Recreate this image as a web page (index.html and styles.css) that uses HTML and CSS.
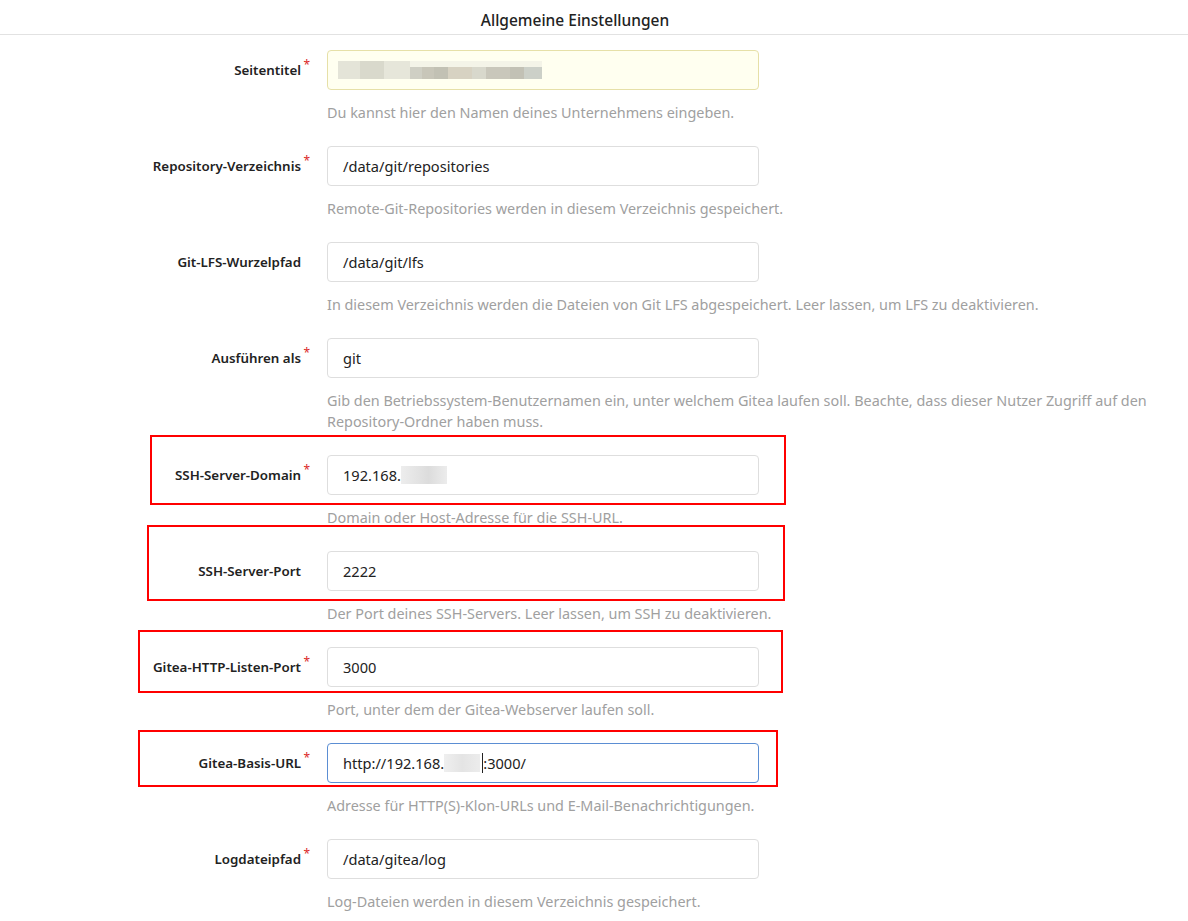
FILE: index.html
```html
<!DOCTYPE html>
<html lang="de">
<head>
<meta charset="utf-8">
<title>Allgemeine Einstellungen</title>
<link rel="stylesheet" href="styles.css">
</head>
<body>
<div class="page">
  <h4 class="header">Allgemeine Einstellungen</h4>
  <div class="form">
    <div class="field required">
      <label class="label">Seitentitel</label>
      <div class="input warn"><span class="blur b1"><i class="s1"></i><i class="s2"></i><i class="s3"></i><i class="s4"></i><i class="s5"></i><i class="s6"></i><i class="s7"></i><i class="s8"></i><i class="s9"></i><i class="s10"></i><i class="s11"></i></span></div>
      <div class="help">Du kannst hier den Namen deines Unternehmens eingeben.</div>
    </div>
    <div class="field required">
      <label class="label">Repository-Verzeichnis</label>
      <div class="input">/data/git/repositories</div>
      <div class="help">Remote-Git-Repositories werden in diesem Verzeichnis gespeichert.</div>
    </div>
    <div class="field">
      <label class="label">Git-LFS-Wurzelpfad</label>
      <div class="input">/data/git/lfs</div>
      <div class="help">In diesem Verzeichnis werden die Dateien von Git LFS abgespeichert. Leer lassen, um LFS zu deaktivieren.</div>
    </div>
    <div class="field required">
      <label class="label">Ausführen als</label>
      <div class="input">git</div>
      <div class="help">Gib den Betriebssystem-Benutzernamen ein, unter welchem Gitea laufen soll. Beachte, dass dieser Nutzer Zugriff auf den Repository-Ordner haben muss.</div>
    </div>
    <div class="field required">
      <label class="label">SSH-Server-Domain</label>
      <div class="input">192.168.<span class="blur b2"></span></div>
      <div class="help">Domain oder Host-Adresse für die SSH-URL.</div>
    </div>
    <div class="field">
      <label class="label">SSH-Server-Port</label>
      <div class="input">2222</div>
      <div class="help">Der Port deines SSH-Servers. Leer lassen, um SSH zu deaktivieren.</div>
    </div>
    <div class="field required">
      <label class="label">Gitea-HTTP-Listen-Port</label>
      <div class="input">3000</div>
      <div class="help">Port, unter dem der Gitea-Webserver laufen soll.</div>
    </div>
    <div class="field required">
      <label class="label">Gitea-Basis-URL</label>
      <div class="input focus">http://192.168.<span class="blur b3"></span><span class="caret"></span>:3000/</div>
      <div class="help">Adresse für HTTP(S)-Klon-URLs und E-Mail-Benachrichtigungen.</div>
    </div>
    <div class="field required">
      <label class="label">Logdateipfad</label>
      <div class="input">/data/gitea/log</div>
      <div class="help">Log-Dateien werden in diesem Verzeichnis gespeichert.</div>
    </div>
  </div>
  <div class="mark m1"></div>
  <div class="mark m2"></div>
  <div class="mark m3"></div>
  <div class="mark m4"></div>
</div>
</body>
</html>
```

FILE: styles.css
```css
html, body {
  margin: 0;
  padding: 0;
  background: #fff;
}
body {
  font-family: "Noto Sans", "Open Sans", sans-serif;
  font-size: 14px;
  color: #333;
}
.page {
  position: relative;
  width: 1188px;
  height: 921px;
  overflow: hidden;
}
.header {
  margin: 0;
  width: 100%;
  height: 35px;
  box-sizing: border-box;
  padding-top: 9px;
  text-align: center;
  text-indent: -38px;
  font-size: 15.5px;
  font-weight: 500;
  line-height: 22px;
  color: #222;
  border-bottom: 1px solid #e2e2e2;
}
.form {
  padding-top: 15px;
}
.field {
  display: grid;
  grid-template-columns: 311px 432px;
  column-gap: 16px;
  row-gap: 12px;
  margin-bottom: 23px;
}
.label {
  grid-column: 1;
  grid-row: 1;
  align-self: center;
  text-align: right;
  font-size: 13.35px;
  font-weight: 600;
  color: #222;
  padding-right: 10px;
  position: relative;
  line-height: 18px;
  margin-top: -1px;
}
.field.required .label::after {
  content: "*";
  color: #db2828;
  position: absolute;
  right: 1px;
  top: -5px;
  font-weight: 400;
  font-size: 12px;
}
.input {
  grid-column: 2;
  grid-row: 1;
  height: 40px;
  box-sizing: border-box;
  border: 1px solid #dedede;
  border-radius: 4px;
  padding: 0 15px;
  display: flex;
  align-items: center;
  font-size: 14.6px;
  color: #222;
  white-space: nowrap;
}
.input.warn {
  background: #fffff0;
  border-color: #e6e0a8;
}
.input.focus {
  border-color: #5b8ed3;
}
.help {
  grid-column: 2 / span 1;
  grid-row: 2;
  width: 830px;
  font-size: 14.4px;
  line-height: 21px;
  color: #a0a0a0;
}
.blur {
  display: inline-flex;
  height: 18px;
  background: #e9e9e6;
}
.b1 {
  width: 204px;
  margin-left: -5px;
  background: #f4f4e8;
}
.b1 i {
  display: block;
  height: 100%;
}
.b1 .s1 { width: 22px; background: #e4e4d8; }
.b1 .s2 { width: 24px; background: #d9d9cc; }
.b1 .s3 { width: 26px; background: #e6e6da; }
.b1 .s4 { width: 12px; background: #cfcfc4; margin-top: 6px; height: 12px; }
.b1 .s5 { width: 12px; background: #c8c6b9; margin-top: 6px; height: 12px; }
.b1 .s6 { width: 14px; background: #c2c1b4; margin-top: 6px; height: 12px; }
.b1 .s7 { width: 24px; background: #d7d2c2; margin-top: 6px; height: 12px; }
.b1 .s8 { width: 14px; background: #d8d8cc; margin-top: 6px; height: 12px; }
.b1 .s9 { width: 24px; background: #c9c7bb; margin-top: 6px; height: 12px; }
.b1 .s10 { width: 14px; background: #c2c1b5; margin-top: 6px; height: 12px; }
.b1 .s11 { width: 18px; background: #ccd0c8; margin-top: 6px; height: 12px; }
.b2 {
  width: 46px;
  background: linear-gradient(90deg, #ededed 0%, #e2e2e2 40%, #dcdcdc 60%, #ececec 100%);
}
.b3 {
  width: 36px;
  background: linear-gradient(90deg, #efefef 0%, #e4e4e4 50%, #ececec 100%);
}
.caret {
  display: inline-block;
  width: 1px;
  height: 20px;
  background: #222;
  margin-left: 2px;
}
.mark {
  position: absolute;
  border: 2px solid #f00;
  box-sizing: border-box;
  pointer-events: none;
}
.m1 { left: 150px; top: 435px; width: 636px; height: 70px; }
.m2 { left: 147px; top: 525px; width: 638px; height: 76px; }
.m3 { left: 138px; top: 630px; width: 645px; height: 63px; }
.m4 { left: 138px; top: 730px; width: 640px; height: 57px; }
```
